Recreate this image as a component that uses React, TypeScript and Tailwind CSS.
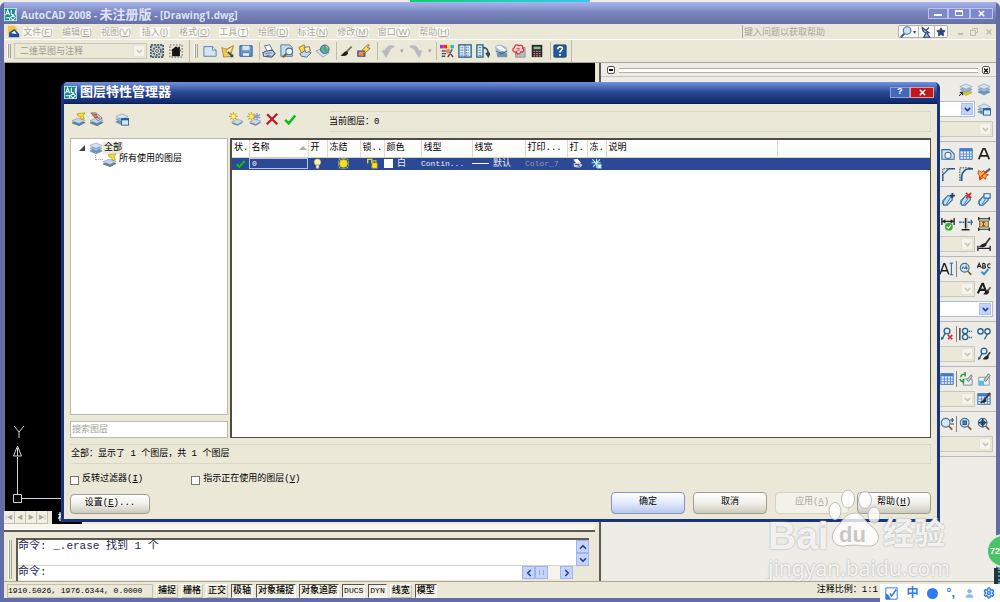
import type { ReactNode } from "react";
import {
  ChevronDown,
  ChevronLeft,
  ChevronRight,
  ChevronUp,
  Settings,
  Star,
  User,
  X,
} from "lucide-react";

const UI = "font-['Liberation_Sans','Noto_Sans_CJK_SC',sans-serif]";
const SONG = "font-['Liberation_Mono','Noto_Sans_CJK_SC',monospace]";

/* ---------- icons ---------- */

function Icon({ children }: { children: ReactNode }) {
  return (
    <svg viewBox="0 0 16 16" className="block size-3.5 shrink-0" fill="none">
      {children}
    </svg>
  );
}

function LogoIcon() {
  return (
    <svg viewBox="0 0 16 16" className="block size-[13px] shrink-0" fill="none">
      <rect x="0.5" y="0.5" width="15" height="15" fill="#128a86" stroke="#cfeeee" />
      <path d="M2 9 4.5 2.5 7 9M3 7h3M9 2v6h3M14 2v7" stroke="#fff" strokeWidth="1.3" />
      <path d="M2 12h5v3M8 11.5l3-2.5 3 3-3 3z" stroke="#e8ffff" strokeWidth="1.3" />
    </svg>
  );
}

const stack = (
  <>
    <path d="m1 11.5 7-3 7 3-7 3.2z" fill="#6f96bb" stroke="#4d7397" strokeWidth=".6" />
    <path d="m1 8.5 7-3 7 3-7 3.2z" fill="#9dbbd6" stroke="#54789c" strokeWidth=".6" />
    <path d="m1 5.2 7-3 7 3-7 3.2z" fill="#d5e4f1" stroke="#6d8dac" strokeWidth=".6" />
  </>
);

const lowStack = (
  <>
    <path d="m0 12.500 7-3 8 2.500-7 3.700z" fill="#5f82a3" stroke="#46647f" strokeWidth=".6" />
    <path d="m0 10 7-3 8 2.500-7 3.700z" fill="#c0d6e9" stroke="#6b8baa" strokeWidth=".6" />
  </>
);

const slab = (
  <>
    <path d="m3 13 6-3.500 7 2.500-6 3.800z" fill="#5f86ab" />
    <path d="m3 11.500 6-3.500 7 2.500-6 3.800z" fill="#c6d9ea" stroke="#7292b0" strokeWidth=".6" />
  </>
);

const spark = (
  <>
    <path d="M5 0v10M0 5h10M1.500 1.500l7 7M8.500 1.500l-7 7" stroke="#c9a62a" strokeWidth="1.300" />
    <circle cx="5" cy="5" r="2.600" fill="#ffef7d" stroke="#d8b332" strokeWidth=".7" />
  </>
);

const windowMark = (
  <>
    <rect x="7.5" y="7.5" width="8" height="7.5" fill="#d3e8f8" stroke="#235f9c" />
    <path d="M7 8.5h9" stroke="#235f9c" strokeWidth="2" />
  </>
);

const table = (
  <>
    <rect x="1" y="2" width="14" height="12" fill="#eaf3ff" stroke="#285ea8" />
    <path d="M1 3.5h14" stroke="#3f7bd0" strokeWidth="3" />
    <path d="M1 8h14M1 11h14M5 5v9M8.500 5v9M12 5v9" stroke="#5688cb" />
  </>
);

const lens = (
  <>
    <path d="m9.500 10 4.500 4.500" stroke="#8a5a28" strokeWidth="2" />
    <circle cx="6.500" cy="6.500" r="5" fill="#d4e8f7" stroke="#4b7190" strokeWidth="1.300" />
  </>
);

const tag = (
  <>
    <path d="m2 10 6-6 4 1 1 4-6 6H3z" fill="#c6e0f3" stroke="#2a6da0" strokeWidth="1.200" />
    <path d="m1 14 5-8m0 8 5-8" stroke="#2a6da0" />
  </>
);

const leader = (
  <>
    <circle cx="8" cy="4.500" r="3.300" fill="#e5f2fb" stroke="#27628f" strokeWidth="1.500" />
    <path d="M6 7 2.500 13.500" stroke="#27628f" strokeWidth="1.500" />
    <path d="m1 15 .5-4 3 2z" fill="#27628f" />
  </>
);

const drawings: Record<string, ReactNode> = {
  gear: (
    <>
      <rect x="1" y="1" width="14" height="14" fill="#c3cbd0" stroke="#49606d" strokeWidth="2" strokeDasharray="2.500 1" />
      <circle cx="8" cy="8" r="4.300" fill="#e4e5df" stroke="#47545e" strokeWidth="2" strokeDasharray="2 1" />
      <circle cx="8" cy="8" r="1.700" stroke="#47545e" />
    </>
  ),
  home: (
    <>
      <rect x="1" y="1" width="14" height="14" stroke="#8a8a84" strokeWidth="1.500" strokeDasharray="2 1.500" />
      <path d="m8 2.500 6 5h-1.500V14h-9V7.500H2z" fill="#151515" />
      <path d="M10.500 3h2v3h-2z" fill="#151515" />
    </>
  ),
  newFile: (
    <>
      <path d="M1 3h10l4 4v7H1z" fill="#d3e5f5" stroke="#4a78a5" />
      <path d="M11 3v4h4" fill="#fff" stroke="#4a78a5" />
    </>
  ),
  open: (
    <>
      <path d="m1 4 5 2 8-4-3 12-8 1z" fill="#f4cb52" stroke="#97711b" strokeWidth=".8" />
      <path d="m5 8 9-6-4 10z" fill="#fff0b4" stroke="#a98631" strokeWidth=".8" />
      <path d="m8 9 5 5" stroke="#34424e" strokeWidth="1.800" />
      <path d="m14 15-4 0 4-4z" fill="#34424e" />
    </>
  ),
  save: (
    <>
      <path d="M1 2h14v12H1z" fill="#6c9bd1" stroke="#1e4a86" />
      <path d="M4 2h8v5H4z" fill="#d5e4f5" />
      <path d="M4 10h8v4H4z" fill="#e9f1fa" stroke="#1e4a86" strokeWidth=".6" />
    </>
  ),
  print: (
    <>
      <path d="m3 2 6-1 3 7-6 1z" fill="#fff" stroke="#536b90" />
      <path d="m1 10 4-2 7-1 3 4-4 4-9-1z" fill="#c3cee2" stroke="#465d87" strokeWidth="1.200" />
      <path d="m4 11 7-1M5 13l5 .5" stroke="#465d87" strokeWidth=".8" />
    </>
  ),
  preview: (
    <>
      <path d="M1 1h10l3 3v10H1z" fill="#c5dcf0" stroke="#3d6b9c" />
      <path d="m8 11-5 4" stroke="#885829" strokeWidth="2.200" />
      <circle cx="10.500" cy="8.500" r="3.800" fill="#e6f1f8" stroke="#51718c" strokeWidth="1.200" />
    </>
  ),
  publish: (
    <>
      <path d="m2 11 7-4 6 3-5 5-6-1z" fill="#c9d5e8" stroke="#47618c" />
      <path d="m1 4 6-3 3 5-6 4z" fill="#ffd84f" stroke="#9a7414" />
      <path d="m7 4 6-1 1 5-5 2z" fill="#ffeea3" stroke="#5f6f8a" />
    </>
  ),
  globe: (
    <>
      <path d="m0 8 7-3 8 5-7 5z" fill="#d9e1ef" stroke="#7d8ca4" strokeWidth=".8" />
      <circle cx="10" cy="6" r="5" fill="#3e9bc8" stroke="#2e5a84" strokeWidth=".8" />
      <path d="M6 5c2-4 4-2 3 0s3 2 2 4-4 0-5-4M12 3l2.500 4-2 2z" fill="#69bb5c" />
      <path d="M11 2c2 0 3 1 3 3l-2 0z" fill="#e8a95a" />
    </>
  ),
  brush: (
    <>
      <path d="m14.500 3-6 6" stroke="#7b6e60" strokeWidth="2" />
      <path d="M9.500 8.500c-3-1-4 2-8 5 4 .5 8 0 9-3z" fill="#25211d" />
    </>
  ),
  blockEdit: (
    <>
      <path d="M1 8h8v6H1z" fill="#f08a5a" stroke="#304a80" strokeWidth="1.400" />
      <path d="M12 1 6 7l3 1-2 4 8-7-3-1 2-3z" fill="#ffdf45" stroke="#70561a" strokeWidth=".8" />
    </>
  ),
  undo: <path d="M14 3C7 1 4 5 4 10M1 8l3.500 6L8 8z" stroke="#b9bac0" strokeWidth="2" fill="#b9bac0" />,
  redo: <path d="M2 3c7-2 10 2 10 7M9 8l3.500 6L15 8z" stroke="#b9bac0" strokeWidth="2" fill="#b9bac0" />,
  properties: (
    <>
      <path d="M0 1h4v4H0z" fill="#a12ce0" />
      <path d="M4 1h4v4H4z" fill="#f22" />
      <path d="M8 1h4v4H8z" fill="#ee2" />
      <path d="M12 1h4v4h-4z" fill="#24b5ed" />
      <path d="M2 8h6M2 11h5M2 14h4M9 7l6 8M14 6l-5 9" stroke="#4a4f58" strokeWidth="1.700" />
      <path d="m5 8 5-3 3 3-4 3z" fill="#d98a76" />
    </>
  ),
  design: (
    <>
      <rect x="1" y="1" width="14" height="14" fill="#e8f3fb" stroke="#285c88" strokeWidth="1.500" />
      <path d="M3 4h4M3 7h4M3 10h4M3 13h4M9 4h4M9 7h4M9 10h4M9 13h4" stroke="#3d7aa6" strokeDasharray="1 1" strokeWidth="1.800" />
      <path d="M8 1v14" stroke="#285c88" />
    </>
  ),
  palettes: (
    <>
      <path d="M1 1h7v14H1z" fill="#dcecf7" stroke="#285c88" strokeWidth="1.500" />
      <path d="M3 4h3M3 7h3M3 10h3M3 13h3" stroke="#3d7aa6" />
      <path d="M8 4c5 0 6 3 6 8M11.500 10l2.500 4 2-4" stroke="#32495b" strokeWidth="2" />
    </>
  ),
  sheets: (
    <>
      <path d="m1 4 8-3 6 3v10H4z" fill="#a9c0d3" />
      <path d="m1 3 6-2 8 6-5 3z" fill="#f3f6f8" stroke="#9aa9b5" strokeWidth=".8" />
      <path d="m3 11 7-3 5 3v4H4z" fill="#6f93b4" />
      <path d="m2 8 7 3 6-3" stroke="#3d627f" />
    </>
  ),
  markup: (
    <>
      <path d="M4 4h11v11H4z" fill="#b5b9bd" stroke="#88909a" />
      <path
        d="M3 3c1-3 4-2 5-1 3-2 5 1 4 3 3 2 0 5-2 4-1 3-5 3-5 0-4 1-5-3-3-4z"
        fill="#f8dedd"
        stroke="#df3434"
        strokeWidth="1.500"
      />
      <path d="M5 5h4M5 7h4" stroke="#df3434" />
    </>
  ),
  calc: (
    <>
      <rect x="2" y="1" width="12" height="14" fill="#252525" />
      <path d="M4 3h8v3H4z" fill="#74c28b" />
      <path d="M4 8.500h8M4 11h8M4 13.500h8" stroke="#e08a91" strokeDasharray="2 1" strokeWidth="1.300" />
    </>
  ),
  help: (
    <>
      <rect x="1" y="1" width="14" height="14" rx="1" fill="#225c9b" stroke="#173f70" />
      <path d="M5.500 6c0-4 6-3.500 5-.2-.5 1.500-2.500 1.700-2.500 3.800M8 11.500v2" stroke="#fff" strokeWidth="2" />
    </>
  ),
  layers: stack,
  layerPrev: (
    <>
      <path d="m1 12 7-3 7 3-7 3.200z" fill="#e8c52b" stroke="#9c8110" strokeWidth=".6" />
      <path d="m1 8.500 7-3 7 3-7 3.200z" fill="#9dbbd6" stroke="#54789c" strokeWidth=".6" />
      <path d="m1 5.200 7-3 7 3-7 3.200z" fill="#d5e4f1" stroke="#6d8dac" strokeWidth=".6" />
      <path d="m0 16 4-4M1 12h3v3" stroke="#1b3352" strokeWidth="1.200" />
    </>
  ),
  layerState: (
    <>
      {stack}
      {windowMark}
    </>
  ),
  filterNew: (
    <>
      {lowStack}
      <path d="m6 2 9-1-2.500 3 1.500 4-3.500.5L10 5 7 4.500z" fill="#ffe332" stroke="#a8910f" strokeWidth=".8" />
    </>
  ),
  groupNew: (
    <>
      {lowStack}
      <path d="m1 1 6 0 7 6-5 3z" fill="#cfd8e6" stroke="#50607e" strokeWidth=".8" />
      <path d="m2 2 6 1M3 4l6 1M5 6l6 1" stroke="#c94a3c" strokeWidth="1.300" />
    </>
  ),
  layerNew: (
    <>
      {slab}
      {spark}
    </>
  ),
  layerFreeze: (
    <>
      {slab}
      <path d="M11.500 1v8M8 3l7 4M15 3 8 7" stroke="#8b9ccb" strokeWidth="1.600" />
      {spark}
    </>
  ),
  remove: <path d="M2.500 2.500 14 14M14 2 2 14" stroke="#b8172c" strokeWidth="2.500" />,
  accept: <path d="m2.500 9 4 4 7.500-9" stroke="#0bbd1d" strokeWidth="3" />,
  bulb: (
    <>
      <circle cx="8" cy="6" r="4.500" fill="#fff9b0" stroke="#e5c642" />
      <path d="M6 10h4v5H6z" fill="#f5f5f5" stroke="#9a9a82" />
    </>
  ),
  sun: (
    <>
      <path d="m1 1 14 14M15 1 1 15M4 1h8M4 15h8M1 4v8M15 4v8" stroke="#8fae6a" strokeWidth="1.500" />
      <circle cx="8" cy="8" r="5.500" fill="#ffe01d" stroke="#e9c400" />
    </>
  ),
  lock: (
    <>
      <path d="M1 8V2h6v6" stroke="#dedb35" strokeWidth="2" />
      <path d="M7 7h8v8H7z" fill="#f5e32d" stroke="#89811a" />
      <path d="M9 7V4h4v3" stroke="#d8cb2d" strokeWidth="1.500" />
    </>
  ),
  plotSmall: (
    <>
      <path d="m2 2 6-1 5 6-6 2z" fill="#fff" />
      <path d="m2 8 8-2 5 4-3 4-9-1z" fill="#c6d0e2" />
      <path d="m4 9 7 1M9 11l5 4" stroke="#4a5878" strokeWidth="1.500" />
    </>
  ),
  freezeSmall: (
    <>
      <path d="m2 2 11 11M13 2 3 13M8 1v13M1 7h13" stroke="#b8eef5" strokeWidth="1.600" />
      <path d="M9 9h6v6H9z" fill="#e5f5f5" stroke="#65b1ae" />
    </>
  ),
  region: (
    <>
      <path d="M1 3h9l5 5v6H1z" fill="#d3e7f6" stroke="#2e6899" strokeWidth="1.200" />
      <circle cx="8" cy="9.500" r="3.500" fill="#fff" stroke="#2e6899" strokeWidth="1.200" />
    </>
  ),
  table,
  textA: <path d="M2 14 7 2h2l5 12M4.500 10h7" stroke="#1f1f1f" strokeWidth="2" />,
  chamfer: (
    <>
      <path d="M2 16V9l7-7h7" stroke="#2d6fae" strokeWidth="1.500" />
      <path d="M2 16V2h14" stroke="#333" strokeDasharray="2 1" />
    </>
  ),
  fillet: (
    <>
      <path d="M3 16V11Q4 3 11 2h5" stroke="#205a96" strokeWidth="2" />
      <path d="M1 16V1h13" stroke="#333" strokeDasharray="2 1" />
    </>
  ),
  explode: (
    <>
      <path d="m9 7 6-5" stroke="#5d5a55" strokeWidth="2.500" />
      <path d="m2 4 3 2 3-2 1 4 4 1-3 2v3l-3-2-4 3 0-5-2-2z" fill="#f6b92a" stroke="#d2341a" />
      <path d="m3 13 5-5" stroke="#c31515" strokeWidth="1.800" strokeDasharray="2 1" />
    </>
  ),
  tagAdd: (
    <>
      {tag}
      <path d="M13 1v6M10 4h6" stroke="#164474" strokeWidth="2" />
    </>
  ),
  tagRemove: (
    <>
      {tag}
      <path d="m8 1 6 6M14 1 8 7" stroke="#dd2626" strokeWidth="1.800" />
    </>
  ),
  tagSync: (
    <>
      {tag}
      <path d="M8 2h7v5H8z" fill="#eff8fd" stroke="#286697" strokeWidth="1.300" />
    </>
  ),
  dimCheck: (
    <>
      <path d="M1 1v8M15 1v8M1 5h14" stroke="#222" strokeWidth="1.500" />
      <path d="m1 5 4-2.500v5zM15 5l-4-2.500v5z" fill="#222" />
      <circle cx="9" cy="11" r="4.500" fill="#3ba935" />
      <path d="m6.500 11 2 2 3-4" stroke="#fff" strokeWidth="1.300" />
    </>
  ),
  dimBreak: (
    <>
      <path d="M0 6h6M10 6h6" stroke="#2b6ba0" strokeWidth="1.500" strokeDasharray="3 1" />
      <path d="M7.500 1v12M3 14.500h9" stroke="#222" strokeWidth="1.600" />
      <path d="M9 1v12" stroke="#888" />
      <path d="M14 3v6" stroke="#2b6ba0" strokeWidth="1.500" />
    </>
  ),
  dimSpace: (
    <>
      <path d="M1 2h14M1 14h14M2 0v4M14 0v4M2 12v4M14 12v4" stroke="#222" strokeWidth="1.400" />
      <path d="M3 4.500h10v7H3z" fill="#efbd55" stroke="#555" />
      <path d="M6 6h3M7.500 6v4M6 10h3" stroke="#333" />
    </>
  ),
  dimStyle: (
    <>
      <path d="m15 1-6 8" stroke="#4d3b28" strokeWidth="2" />
      <path d="M10 7c-4 0-5 2-8 4 4 1 7 1 9-2z" fill="#222" />
      <path d="M1 10v6M15 10v6M1 13h14" stroke="#222" strokeWidth="1.500" />
    </>
  ),
  textEdit: (
    <>
      <path d="M0 14 4.500 2h1L10 14M2 10h6" stroke="#1f1f1f" strokeWidth="1.600" />
      <path d="M13 2v12M11 1.500h4M11 14.500h4" stroke="#2a6a9e" strokeWidth="1.200" />
    </>
  ),
  textFind: (
    <>
      {lens}
      <path d="M4 8c-1-3 2-3 2-1v1M8 4v4c2 0 2-2 0-2" stroke="#1c3c5c" />
    </>
  ),
  spell: (
    <>
      <path
        d="m0 7 2.500-5.500L5 7M1 5h3M6.500 1.500V7h2.500c1.500-1 .5-2.500-.5-2.500h-2M8.500 4.500c1.500-.5 1.500-3-2-3M15.500 2.500c-4-2.500-5 5.500 0 4"
        stroke="#222"
        strokeWidth="1.200"
      />
      <path d="m5 11 3 3 5-6" stroke="#3f8fc6" strokeWidth="2.300" />
    </>
  ),
  textStyle: (
    <>
      <path d="M1 13 6 2h1l4 11M3 9h6.500" stroke="#1f1f1f" strokeWidth="2.300" />
      <path d="m15.500 6-4 5" stroke="#7b5b38" strokeWidth="2" />
      <path d="M12 9c-2 1-3 3-5 5 4 1 6 0 7-3z" fill="#222" />
    </>
  ),
  leaderRemove: (
    <>
      {leader}
      <path d="m9 9 5 5M14 9l-5 5" stroke="#e12828" strokeWidth="1.800" />
    </>
  ),
  leaderAlign: (
    <>
      <path d="M1 1v14" stroke="#333" strokeWidth="1.500" />
      <circle cx="7" cy="4.500" r="3" stroke="#27628f" strokeWidth="1.500" />
      <circle cx="7" cy="11.500" r="3" stroke="#27628f" strokeWidth="1.500" />
      <path d="M11 5h4M11 12h4" stroke="#27628f" strokeWidth="1.500" strokeDasharray="2 1" />
    </>
  ),
  leaderCollect: (
    <>
      <circle cx="4" cy="5" r="3" stroke="#27628f" strokeWidth="1.500" />
      <circle cx="12" cy="5" r="3" stroke="#27628f" strokeWidth="1.500" />
      <path d="M12 8 8.500 14" stroke="#27628f" strokeWidth="1.500" />
    </>
  ),
  leaderStyle: (
    <>
      {leader}
      <path d="m15 6-3 4" stroke="#4d3b28" strokeWidth="1.800" />
      <path d="M12.500 9c-3 1-4 3-6 5 4 1 7 0 7-3z" fill="#222" />
    </>
  ),
  dataUpdate: (
    <>
      <path d="M5 8h10v7H5z" fill="#e7edf0" stroke="#7b8790" />
      <path d="m9 9 5-6 1 2-4 6z" fill="#c6cbd0" stroke="#737b81" />
      <path d="M2 6c0-3 3-4 5-3M7 0v5M1 8c1 3 3 3 5 2M5 8v5" stroke="#239a37" strokeWidth="1.700" />
    </>
  ),
  dataLink: (
    <>
      <path d="M2 6h12v9H2z" fill="#eef4f8" stroke="#7f95a6" />
      <path d="M2 10h6v5H2z" fill="#56b9e6" />
      <path d="m8 9 5-7 2 2-5 7z" fill="#c6cbd0" stroke="#636b71" />
    </>
  ),
  tableStyle: (
    <>
      {table}
      <path d="m15 1-7 8" stroke="#4d3b28" strokeWidth="2" />
      <path d="M9 8c-3 1-3 3-6 4 4 1 7 0 8-3z" fill="#222" />
    </>
  ),
  zoomRealtime: (
    <>
      {lens}
      <path d="M14 1v5M11.500 3.500h5M12 8h4" stroke="#27506f" strokeWidth="1.200" />
    </>
  ),
  zoomWindow: (
    <>
      {lens}
      <rect x="4.500" y="4.500" width="4" height="4" fill="#4b88b8" stroke="#1d466a" />
    </>
  ),
  zoomExtents: (
    <>
      {lens}
      <path d="M6.500 2v9M2 6.500h9" stroke="#1e3f5a" strokeWidth="2" />
      <path d="M4.500 4.500h4v4h-4z" stroke="#1e3f5a" />
    </>
  ),
};

function ToolButton({ name }: { name: string }) {
  return (
    <button aria-label={name} className="flex w-[18px] shrink-0 items-center justify-center">
      <Icon>{drawings[name]}</Icon>
    </button>
  );
}

/* ---------- shared bits ---------- */

function Grip() {
  return (
    <div className="flex h-full w-1 shrink-0 gap-px py-0.5">
      <i className="w-[2px] border-r border-[#a5a393] bg-white" />
      <i className="w-[2px] border-r border-[#a5a393] bg-white" />
    </div>
  );
}

function Divider() {
  return <i className="h-full w-px shrink-0 bg-[#bdbaa8]" />;
}

function Combo({ label, value = "", active = false }: { label: string; value?: string; active?: boolean }) {
  return (
    <div
      className={`flex h-4 min-w-0 flex-1 items-center border p-px ${
        active ? "border-[#b4bccb] bg-white" : "border-[#c9c7ba] bg-[#ebe8d8]"
      }`}
    >
      <select
        aria-label={label}
        disabled={!active}
        className="h-full min-w-0 flex-1 appearance-none bg-transparent pl-1 text-[9px] leading-3 text-[#9d9b8c] opacity-100"
      >
        <option>{value}</option>
      </select>
      <span
        className={`flex h-full w-3 items-center justify-center border ${
          active ? "border-[#a9bff5] bg-[#c3d3fd] text-[#1b3f9c]" : "border-[#e5e3d8] bg-[#f5f4ec] text-[#c9c7ba]"
        }`}
      >
        <ChevronDown size={9} strokeWidth={4} />
      </span>
    </div>
  );
}

/* ---------- main window ---------- */

function TitleBar() {
  const caption = "flex h-[11px] items-center justify-center border border-[#b9c3ee] bg-[#7d8aca] text-white";
  return (
    <header className="flex h-[22px] shrink-0 items-center justify-between bg-linear-to-b from-[#a9b6ee] via-[#7984bd] to-[#6470a4] pr-[3px]">
      <h1 className="flex items-center gap-[4px] pt-0.5 text-[10px] leading-4 font-bold whitespace-pre text-[#dfe4f8] font-['Open_Sans','Noto_Sans_CJK_SC',sans-serif]">
        <LogoIcon />
        <span>
          AutoCAD 2008 - <span className="text-[13px]">未注册版</span> - [Drawing1.dwg]
        </span>
      </h1>
      <div className="flex">
        <button aria-label="最小化" className={`${caption} w-5`}>
          <i className="mt-1 h-[2px] w-2 bg-white" />
        </button>
        <button aria-label="最大化" className={`${caption} w-[22px]`}>
          <i className="h-[6px] w-2 border border-t-2 border-white" />
        </button>
        <button aria-label="关闭" className={`${caption} w-[23px]`}>
          <X size={9} strokeWidth={4} />
        </button>
      </div>
    </header>
  );
}

const menus = [
  ["文件", "F"],
  ["编辑", "E"],
  ["视图", "V"],
  ["插入", "I"],
  ["格式", "O"],
  ["工具", "T"],
  ["绘图", "D"],
  ["标注", "N"],
  ["修改", "M"],
  ["窗口", "W"],
  ["帮助", "H"],
];

function MenuBar() {
  return (
    <div className="flex h-4 shrink-0 items-center justify-between border-b border-white bg-[#ebe8d8] pl-[3px] text-[9px] leading-[10px] text-[#a9a79b]">
      <nav className="flex items-center gap-[9px]">
        <svg viewBox="0 0 16 16" className="-mr-1.5 size-[13px]">
          <path d="M1 1h8l4 4v7H1z" fill="#f3c743" />
          <path d="m3 9 6-4 6 6v4H2z" fill="#214ea2" />
          <path d="m5 10 4-3 3 4z" fill="#fff" />
        </svg>
        {menus.map(([name, key]) => (
          <button key={key} className="min-w-[30px] bg-[#faf9f4] whitespace-nowrap">
            {name}(<u>{key}</u>)
          </button>
        ))}
      </nav>
      <div className="flex items-center">
        <input
          aria-label="帮助"
          placeholder="键入问题以获取帮助"
          className="h-[13px] w-[156px] border-l border-[#aaa898] pl-px placeholder:text-[#a9a79b]"
        />
        <div className="flex h-[13px] w-[50px] items-center justify-around rounded-xs border border-[#aeb0ad] bg-[#f8f8f6] text-[#2b477c]">
          <button aria-label="搜索">
            <svg viewBox="0 0 16 16" className="size-3" fill="none">
              <path d="m1 15 5-5" stroke="#3d5b8f" strokeWidth="2.500" />
              <circle cx="9.500" cy="6" r="5" fill="#cfe0f3" stroke="#52709d" strokeWidth="1.500" />
            </svg>
          </button>
          <span className="text-[6px]">▾</span>
          <Divider />
          <button aria-label="通讯中心">
            <svg viewBox="0 0 16 16" className="size-3" fill="none" stroke="#2b477c" strokeWidth="1.500">
              <path d="M3 2c0 6 4 8 9 7zM8 9l-3 6h8L9 9M8 6l4-4" fill="#a9bedb" />
            </svg>
          </button>
          <Divider />
          <button aria-label="收藏夹">
            <Star size={10} fill="currentColor" />
          </button>
        </div>
        <div className="flex w-12 items-center justify-around pl-1.5 text-[#bdbbb0]">
          <button aria-label="最小化文档">
            <i className="mt-1 block h-[2px] w-[5px] bg-[#bdbbb0]" />
          </button>
          <button aria-label="还原文档">
            <svg viewBox="0 0 8 8" className="size-2" fill="none" stroke="currentColor">
              <path d="M2.500 2V.5h5v4H6M.5 2.500h5v5h-5z" />
            </svg>
          </button>
          <button aria-label="关闭文档">
            <X size={8} strokeWidth={4} />
          </button>
        </div>
      </div>
    </div>
  );
}

function ToolBars() {
  return (
    <div className="flex h-[23px] shrink-0 gap-1 border-b border-[#aaa899] bg-[#ebe8d8]">
      <div className="flex w-[186px] items-center gap-px border-r border-[#bdbaa8] py-0.5 pr-1 pl-[3px]">
        <Grip />
        <div className="ml-0.5 flex flex-1">
          <Combo label="工作空间" value="二维草图与注释" />
        </div>
        <ToolButton name="gear" />
        <ToolButton name="home" />
      </div>
      <div className="flex items-center border-r border-[#bdbaa8] py-0.5 pr-0.5">
        <Grip />
        <div className="flex h-full pl-[3px]">
          <ToolButton name="newFile" />
          <ToolButton name="open" />
          <ToolButton name="save" />
        </div>
        <div className="ml-1 flex h-full border-l border-[#bdbaa8]">
          <ToolButton name="print" />
          <ToolButton name="preview" />
          <ToolButton name="publish" />
          <ToolButton name="globe" />
        </div>
        <div className="ml-1 flex h-full border-l border-[#bdbaa8]">
          <ToolButton name="brush" />
          <ToolButton name="blockEdit" />
        </div>
        <div className="ml-1 flex h-full items-center border-l border-[#bdbaa8] pl-0.5 text-[7px] text-[#a9a79b]">
          <ToolButton name="undo" />
          <span className="w-2 text-center">▾</span>
          <ToolButton name="redo" />
          <span className="w-3 text-center">▾</span>
        </div>
        <div className="flex h-full border-l border-[#bdbaa8] pl-px">
          <ToolButton name="properties" />
          <ToolButton name="design" />
          <ToolButton name="palettes" />
          <ToolButton name="sheets" />
          <ToolButton name="markup" />
          <ToolButton name="calc" />
        </div>
        <div className="ml-1 flex h-full border-l border-[#bdbaa8]">
          <ToolButton name="help" />
        </div>
      </div>
    </div>
  );
}

function Canvas() {
  return (
    <div className="flex min-h-0 flex-1 flex-col justify-end border-l border-[#777] bg-black">
      <svg viewBox="0 0 100 90" className="h-[90px] w-[100px]" fill="none" stroke="#d4d4d4">
        <path d="m9 5 5 6 5-6M14 11v6M12.500 36v37M17 77.500h83" />
        <path d="m12.500 25 4 10h-8zM12.500 27v8" />
        <path d="M8.500 73.500h8v8h-8z" />
      </svg>
    </div>
  );
}

function LayoutTabs() {
  return (
    <div className="flex h-[13px] shrink-0 bg-[#ebe8d8] text-[9px] leading-[13px]">
      {["|◀", "◀", "▶", "▶|"].map((t) => (
        <button
          key={t}
          className="w-[11px] border-r border-b border-[#c4c1b0] bg-[#f1efe4] text-[6px] whitespace-nowrap text-[#a9a79b]"
        >
          {t}
        </button>
      ))}
      <button className="ml-1 bg-black px-1.5 font-bold text-white">模型</button>
      <button className="px-2">/ 布局1</button>
      <button className="px-1">/ 布局2 /</button>
    </div>
  );
}

function ScrollButton({ label, children }: { label: string; children: ReactNode }) {
  return (
    <button
      aria-label={label}
      className="flex size-[13px] items-center justify-center border border-[#9fb5ee] bg-[#c6d4fc] text-[#1f409b]"
    >
      {children}
    </button>
  );
}

function CommandPanel() {
  return (
    <div className="flex h-[51px] shrink-0 border-t-2 border-[#5e5c50] bg-[#ebe8d8] pt-[6px] pr-1.5 pl-1">
      <Grip />
      <div className={`ml-1 flex min-w-0 flex-1 flex-col border-t-2 border-l-2 border-[#5e5c50] text-[11px] text-[#252550] ${SONG}`}>
        <div className="flex h-[26px] shrink-0 justify-between border-b border-[#d5d3ca] bg-white">
          <p className="leading-[13px] whitespace-pre">命令: _.erase 找到 1 个</p>
          <div>
            <ScrollButton label="向上">
              <ChevronUp size={10} strokeWidth={4} />
            </ScrollButton>
            <ScrollButton label="向下">
              <ChevronDown size={10} strokeWidth={4} />
            </ScrollButton>
          </div>
        </div>
        <div className="flex h-[14px] pr-4">
          <label className="flex flex-1 bg-white leading-[13px] whitespace-pre">
            命令: <input className="min-w-0 flex-1 outline-none" />
          </label>
          <ScrollButton label="向左">
            <ChevronLeft size={10} strokeWidth={4} />
          </ScrollButton>
          <i className="h-[13px] w-[13px] border border-[#9fb5ee] bg-[#c6d4fc] p-[3px]">
            <i className="block h-full border-x border-[#8ea6ea]" />
          </i>
          <i className="h-[13px] w-3 bg-[#f4f3ec]" />
          <ScrollButton label="向右">
            <ChevronRight size={10} strokeWidth={4} />
          </ScrollButton>
        </div>
      </div>
    </div>
  );
}

const modes = [
  { label: "捕捉", on: false },
  { label: "栅格", on: false },
  { label: "正交", on: false },
  { label: "极轴", on: true },
  { label: "对象捕捉", on: true },
  { label: "对象追踪", on: true },
  { label: "DUCS", on: true },
  { label: "DYN", on: true },
  { label: "线宽", on: false },
  { label: "模型", on: true },
];

function StatusBar() {
  return (
    <footer
      className={`flex h-[17px] shrink-0 items-center border-t border-[#aaa899] bg-[#ebe8d8] pt-px pl-[3px] text-[8px] text-black ${SONG}`}
    >
      <span className="w-[146px] border border-[#c4c1b0] leading-3 whitespace-pre">1910.5026, 1976.6344, 0.0000</span>
      <div className="flex gap-[3px] pl-[3px]">
        {modes.map((m) => (
          <button
            key={m.label}
            className={`border px-px font-medium whitespace-nowrap ${
              m.on ? "border-[#55534a] border-r-white border-b-white bg-[#f3f1e6]" : "border-white border-r-[#c4c1b0] border-b-[#c4c1b0]"
            }`}
          >
            <span className={m.label.startsWith("D") ? "block leading-[12px]" : "block text-[9px] leading-[12px]"}>{m.label}</span>
          </button>
        ))}
      </div>
      <span className="mr-[118px] ml-auto text-[9px]">注释比例：1:1</span>
    </footer>
  );
}

/* ---------- dashboard on the right ---------- */

function Group({ children }: { children: ReactNode }) {
  return <section className="border-b border-[#b9b8b3] py-0.5 pr-[3px]">{children}</section>;
}

function Row({ icons = [], lead, children }: { icons?: string[]; lead?: string; children?: ReactNode }) {
  return (
    <div className="flex h-5 items-center justify-end">
      {children}
      {lead && (
        <>
          <ToolButton name={lead} />
          <i className="h-4 w-px bg-[#85847e]" />
        </>
      )}
      {icons.map((name) => (
        <ToolButton key={name} name={name} />
      ))}
    </div>
  );
}

function Dashboard() {
  return (
    <aside className="flex min-w-0 flex-1 flex-col border-l-2 border-[#5e5c50] bg-[#edece7]">
      <div className="flex h-[14px] shrink-0 items-end gap-1 border-b border-[#c4c3be] px-1.5 pb-px">
        <button
          aria-label="折叠"
          className="mb-px flex size-2 items-center justify-center rounded-xs border border-[#555] bg-white"
        >
          <i className="h-[2px] w-1 bg-black" />
        </button>
        <i className="mb-0.5 h-[5px] flex-1 border-y border-[#b3b1a8] bg-white" />
        <button
          aria-label="关闭面板"
          className="mb-px flex size-2 items-center justify-center rounded-xs border border-[#555] bg-white"
        >
          <X size={7} strokeWidth={5} />
        </button>
      </div>
      <div className="min-h-0 w-40 flex-1 self-end">
        <Group>
          <Row icons={["layerPrev", "layers"]} />
          <Row icons={["layerState"]}>
            <Combo label="图层" active />
          </Row>
          <Row>
            <Combo label="图层状态" />
          </Row>
        </Group>
        <Group>
          <Row icons={["region", "table", "textA"]} />
          <Row icons={["chamfer", "fillet", "explode"]} />
        </Group>
        <Group>
          <Row icons={["tagAdd", "tagRemove", "tagSync"]} />
        </Group>
        <Group>
          <Row icons={["dimCheck", "dimBreak", "dimSpace"]} />
          <Row icons={["dimStyle"]}>
            <Combo label="标注样式" />
          </Row>
        </Group>
        <Group>
          <Row lead="textEdit" icons={["textFind", "spell"]} />
          <Row icons={["textStyle"]}>
            <Combo label="文字样式" />
          </Row>
          <Row>
            <Combo label="文字高度" active />
          </Row>
        </Group>
        <Group>
          <Row lead="leaderRemove" icons={["leaderAlign", "leaderCollect"]} />
          <Row icons={["leaderStyle"]}>
            <Combo label="多重引线样式" />
          </Row>
        </Group>
        <Group>
          <Row lead="table" icons={["dataUpdate", "dataLink"]} />
          <Row icons={["tableStyle"]}>
            <Combo label="表格样式" />
          </Row>
        </Group>
        <Group>
          <Row lead="zoomRealtime" icons={["zoomWindow", "zoomExtents"]} />
          <Row>
            <Combo label="视图" />
          </Row>
        </Group>
      </div>
    </aside>
  );
}

/* ---------- layer dialog ---------- */

const columns = [
  { label: "状.", width: "w-[17px]" },
  { label: "名称", width: "w-[59px]" },
  { label: "开", width: "w-[19px]" },
  { label: "冻结", width: "w-[33px]" },
  { label: "锁..", width: "w-[24px]" },
  { label: "颜色", width: "w-[37px]" },
  { label: "线型", width: "w-[51px]" },
  { label: "线宽", width: "w-[53px]" },
  { label: "打印...", width: "w-[42px]" },
  { label: "打.", width: "w-[20px]" },
  { label: "冻.", width: "w-[19px]" },
  { label: "说明", width: "w-[171px]" },
  { label: "", width: "" },
];

function CellIcon({ name }: { name: string }) {
  return (
    <svg viewBox="0 0 16 16" className="mx-auto block size-[11px]" fill="none">
      {drawings[name]}
    </svg>
  );
}

function LayerTable() {
  return (
    <div className="min-w-0 flex-1 border border-t-2 border-l-2 border-[#4d4c46] bg-white">
      <table className="w-full table-fixed border-collapse text-left">
        <thead>
          <tr className="h-[17px] border-b border-[#d5d2c2] bg-[#fdfdfb]">
            {columns.map((c) => (
              <th
                key={c.label}
                className={`${c.width} overflow-hidden border-r border-[#dddacb] pl-0.5 leading-3 font-normal whitespace-nowrap last:border-0`}
              >
                {c.label === "名称" ? (
                  <span className="flex items-center justify-between pr-px">
                    名称
                    <i className="size-0 border-x-4 border-b-4 border-x-transparent border-b-[#b3b1a4]" />
                  </span>
                ) : (
                  c.label
                )}
              </th>
            ))}
          </tr>
        </thead>
        <tbody>
          <tr className="h-3 bg-[#2c4996] text-[8px] leading-3 whitespace-nowrap text-[#e8ecf6] [&>td]:h-3 [&>td]:p-0">
            <td>
              <CellIcon name="accept" />
            </td>
            <td>
              <input
                aria-label="图层名称"
                defaultValue="0"
                className="block h-[11px] w-full border border-[#b9c4e2] bg-[#2c4996] pl-0.5 text-white outline-none"
              />
            </td>
            <td>
              <CellIcon name="bulb" />
            </td>
            <td>
              <CellIcon name="sun" />
            </td>
            <td>
              <CellIcon name="lock" />
            </td>
            <td>
              <span className="flex h-3 items-center gap-1 text-[9px] leading-3">
                <i className="size-[9px] bg-white" />白
              </span>
            </td>
            <td>
              <span className="block h-3 leading-3">Contin...</span>
            </td>
            <td>
              <span className="flex h-3 items-center gap-1 text-[9px] leading-3">
                <i className="h-px w-[17px] bg-white" />
                默认
              </span>
            </td>
            <td className="text-[#9a9ca0]">
              <span className="block h-3 leading-3">Color_7</span>
            </td>
            <td>
              <CellIcon name="plotSmall" />
            </td>
            <td>
              <CellIcon name="freezeSmall" />
            </td>
            <td />
            <td />
          </tr>
        </tbody>
      </table>
    </div>
  );
}

function LayerTree() {
  return (
    <ul className="flex-1 border border-[#bcbab0] bg-white pt-[3px] pl-2">
      <li>
        <div className="flex h-3 items-center gap-1">
          <svg viewBox="0 0 6 6" className="size-[6px]">
            <path d="M6 0v6H0z" fill="#444" />
          </svg>
          <Icon>{stack}</Icon>
          <span className="-ml-1 bg-[#ebe8d8] px-px leading-3">全部</span>
        </div>
        <ul className="pl-4">
          <li className="flex h-3 items-center">
            <i className="mb-2 h-2 w-2 border-b border-l border-dotted border-[#aaa]" />
            <Icon>{drawings.filterNew}</Icon>
            <span className="pl-0.5">所有使用的图层</span>
          </li>
        </ul>
      </li>
    </ul>
  );
}

function DialogButton({ children, tone = "plain" }: { children: ReactNode; tone?: "plain" | "primary" | "off" }) {
  const look = {
    plain: "border-[#a09e94] from-white via-[#f0efea] to-[#cdc9bb]",
    primary: "border-[#8296c6] from-white via-[#e2e9fa] to-[#b8c7ef]",
    off: "border-[#d5d3c4] from-[#f3f2e8] to-[#f3f2e8] text-[#a9a79b]",
  }[tone];
  return (
    <button disabled={tone === "off"} className={`h-[22px] w-[74px] rounded-sm border bg-linear-to-b ${look}`}>
      {children}
    </button>
  );
}

function LayerDialog() {
  return (
    <div
      role="dialog"
      aria-label="图层特性管理器"
      className={`absolute top-[82px] right-[60px] bottom-[80px] left-[61px] flex flex-col rounded-t-md border-x-[3px] border-b-[3px] border-[#17357c] bg-[#ebe8d8] text-[9px] text-black ${SONG}`}
    >
      <header className="flex h-[22px] shrink-0 items-center justify-between rounded-t-sm border-b border-[#091e55] bg-linear-to-b from-[#7292e0] via-[#2a4790] to-[#10286a] pr-[3px]">
        <h2 className="flex items-center gap-[3px] text-[13px] leading-4 font-bold text-white">
          <LogoIcon />
          图层特性管理器
        </h2>
        <div className="flex font-bold text-white">
          <button aria-label="帮助" className="h-[11px] w-5 border border-[#8ba1dd] bg-[#4666b6] leading-[9px]">
            ?
          </button>
          <button aria-label="关闭" className="flex h-[11px] w-6 items-center justify-center border border-[#e89c9c] bg-[#c5171b]">
            <X size={9} strokeWidth={4} />
          </button>
        </div>
      </header>

      <div className="flex min-h-0 flex-1 flex-col px-[6px] pt-1">
        <div className="flex h-[30px] shrink-0 items-center">
          <div className="mb-2 flex w-[157px]">
            <ToolButton name="filterNew" />
            <ToolButton name="groupNew" />
            <span className="w-[7px]" />
            <ToolButton name="layerState" />
          </div>
          <div className="mb-2 flex w-[102px]">
            <ToolButton name="layerNew" />
            <ToolButton name="layerFreeze" />
            <ToolButton name="remove" />
            <ToolButton name="accept" />
          </div>
          <p className="mb-1 h-[21px] flex-1 border-y border-r border-[#dad7c6] leading-[20px]">当前图层：0</p>
        </div>

        <div className="flex min-h-0 flex-1 gap-0.5">
          <div className="flex w-[158px] flex-col gap-1.5">
            <LayerTree />
            <input
              aria-label="搜索图层"
              placeholder="搜索图层"
              className="h-[17px] border border-[#bcbab0] bg-white px-px placeholder:text-[#a3a197]"
            />
          </div>
          <LayerTable />
        </div>

        <p className="mt-1.5 h-5 shrink-0 border-y border-r border-[#dad7c6] pl-px leading-[18px] whitespace-pre">
          全部：显示了 1 个图层，共 1 个图层
        </p>

        <div className="mt-2 flex h-4 shrink-0 items-center gap-12">
          <label className="flex items-center gap-[3px]">
            <input type="checkbox" className="size-[9px] appearance-none border border-[#77766e] bg-white" />
            <span>
              反转过滤器(<u>I</u>)
            </span>
          </label>
          <label className="flex items-center gap-[3px]">
            <input type="checkbox" className="size-[9px] appearance-none border border-[#77766e] bg-white" />
            <span>
              指示正在使用的图层(<u>V</u>)
            </span>
          </label>
        </div>

        <div className="mt-1 mb-[5px] flex shrink-0 items-end gap-2">
          <button className="mr-auto h-5 w-20 rounded-sm border border-[#a09e94] bg-linear-to-b from-white via-[#f0efea] to-[#cdc9bb]">
            设置(<u>E</u>)...
          </button>
          <DialogButton tone="primary">确定</DialogButton>
          <DialogButton>取消</DialogButton>
          <DialogButton tone="off">
            应用(<u>A</u>)
          </DialogButton>
          <DialogButton>
            帮助(<u>H</u>)
          </DialogButton>
        </div>
      </div>
    </div>
  );
}

/* ---------- things floating over the desktop ---------- */

function Watermark() {
  return (
    <div className="pointer-events-none absolute right-[55px] bottom-5 w-[177px] text-white/85 [text-shadow:0_0_2px_#999]">
      <div className="relative flex h-[62px] items-end justify-between">
        <span className="text-[39px] leading-[36px] font-bold">Bai</span>
        <svg
          viewBox="0 0 52 60"
          className="absolute bottom-[5px] left-[60px] h-[60px] w-[52px]"
          fill="#fff"
          fillOpacity=".8"
          stroke="#bdbdbd"
        >
          <ellipse cx="7" cy="22" rx="6" ry="8.500" />
          <ellipse cx="20" cy="10" rx="6.500" ry="9" />
          <ellipse cx="37" cy="11" rx="6.500" ry="8.500" />
          <ellipse cx="46" cy="26" rx="6" ry="8" />
          <path d="M27 24c8 0 9 8 16 13 12 8 8 21-3 20-8 0-15-2-23 0-11 1-17-8-9-18 7-7 9-15 19-15z" />
        </svg>
        <span className="absolute bottom-[8px] left-[71px] text-[22px] leading-[22px] font-bold text-[#c8c7c4] [text-shadow:none]">
          du
        </span>
        <span className="text-[31px] leading-[40px] font-bold">经验</span>
      </div>
      <p className="text-[21px] leading-[28px] whitespace-nowrap font-['Noto_Sans',sans-serif]">jingyan.baidu.com</p>
    </div>
  );
}

function InputMethodBar() {
  return (
    <div className="absolute right-0 bottom-0 flex h-[18px] w-[120px] items-center justify-between bg-white px-[5px] text-[#2f7af5]">
      <svg viewBox="0 0 16 16" className="size-[13px]" fill="none">
        <path d="M1 1h14v14H1z" stroke="#2f7af5" strokeWidth="1.200" />
        <path d="M1 8c3 1 5 3 6 7H1z" fill="#2f7af5" />
        <path d="m6 8 2 3 6-8" stroke="#2f7af5" strokeWidth="1.800" />
      </svg>
      <span className="text-[12px] leading-4 font-bold">中</span>
      <i className="size-[11px] rounded-full bg-[#2f7af5]" />
      <span className="text-[13px] leading-4 font-bold">°,</span>
      <User size={11} fill="currentColor" className="text-[#8db6fb]" />
      <Settings size={12} strokeWidth={3} />
    </div>
  );
}

export default function App() {
  return (
    <div className={`relative flex h-screen flex-col overflow-hidden bg-[#edece9] ${UI}`}>
      <div className="mx-auto h-[2px] w-[18%] shrink-0 bg-linear-to-r from-[#09d36b] to-[#35c9ee]" />
      <div className="flex min-h-0 flex-1 flex-col rounded-t-md border-x-4 border-b-4 border-[#626da8]">
        <TitleBar />
        <MenuBar />
        <ToolBars />
        <main className="flex min-h-0 flex-1 bg-[#ebe8d8]">
          <div className="flex w-3/5 flex-col pr-1">
            <Canvas />
            <LayoutTabs />
            <div className="h-[6px] shrink-0 border-b border-white bg-[#f6f5ee]" />
            <CommandPanel />
          </div>
          <Dashboard />
        </main>
        <StatusBar />
      </div>

      <LayerDialog />
      <Watermark />
      <div className="absolute right-0 bottom-[18px] h-4 w-1.5 border-r-2 border-dotted border-[#35a8b5] bg-[#26333b]" />
      <div className="absolute -right-5 bottom-[34px] size-[34px] rounded-full border-2 border-[#e3eee4] bg-[#4ac366] pl-0.5 text-[9px] leading-[30px] font-bold text-white">
        72
      </div>
      <InputMethodBar />
    </div>
  );
}
